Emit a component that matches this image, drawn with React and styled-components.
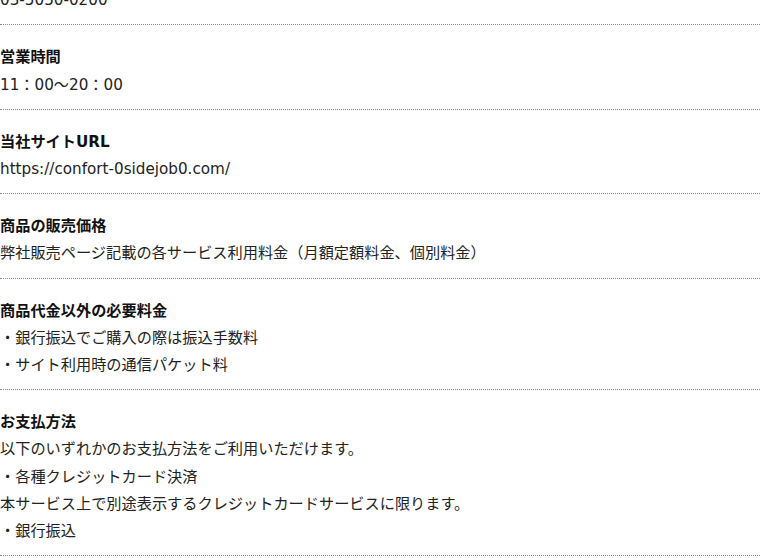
import React from "react";
import styled, { createGlobalStyle } from "styled-components";

const Global = createGlobalStyle`
  html, body { margin: 0; padding: 0; background: #fff; }
  body {
    font-family: "DejaVu Sans", "Noto Sans CJK JP", sans-serif;
    color: #222;
    overflow: hidden;
  }
`;

const Page = styled.div`
  width: 760px;
  height: 560px;
  overflow: hidden;
`;

const List = styled.dl`
  margin: -59px 0 0;
  padding: 0;
`;

const Section = styled.div`
  padding: 19px 0 10px;
  border-bottom: 1px dotted #8a8a8a;
`;

const Term = styled.dt`
  margin: 0;
  font-size: 15.2px;
  line-height: 27.2px;
  font-weight: 700;
  color: #111;
`;

const Desc = styled.dd`
  margin: 0;
  font-size: 15.2px;
  line-height: 27.2px;
  color: #222;
`;

const items = [
  { term: "電話番号", lines: ["03-5050-0200"] },
  { term: "営業時間", lines: ["11：00〜20：00"] },
  { term: "当社サイトURL", lines: ["https://confort-0sidejob0.com/"] },
  {
    term: "商品の販売価格",
    lines: ["弊社販売ページ記載の各サービス利用料金（月額定額料金、個別料金）"],
  },
  {
    term: "商品代金以外の必要料金",
    lines: ["・銀行振込でご購入の際は振込手数料", "・サイト利用時の通信パケット料"],
  },
  {
    term: "お支払方法",
    lines: [
      "以下のいずれかのお支払方法をご利用いただけます。",
      "・各種クレジットカード決済",
      "本サービス上で別途表示するクレジットカードサービスに限ります。",
      "・銀行振込",
    ],
  },
];

export default function App() {
  return (
    <Page>
      <Global />
      <List>
        {items.map((it) => (
          <Section key={it.term}>
            <Term>{it.term}</Term>
            {it.lines.map((l) => (
              <Desc key={l}>{l}</Desc>
            ))}
          </Section>
        ))}
      </List>
    </Page>
  );
}
